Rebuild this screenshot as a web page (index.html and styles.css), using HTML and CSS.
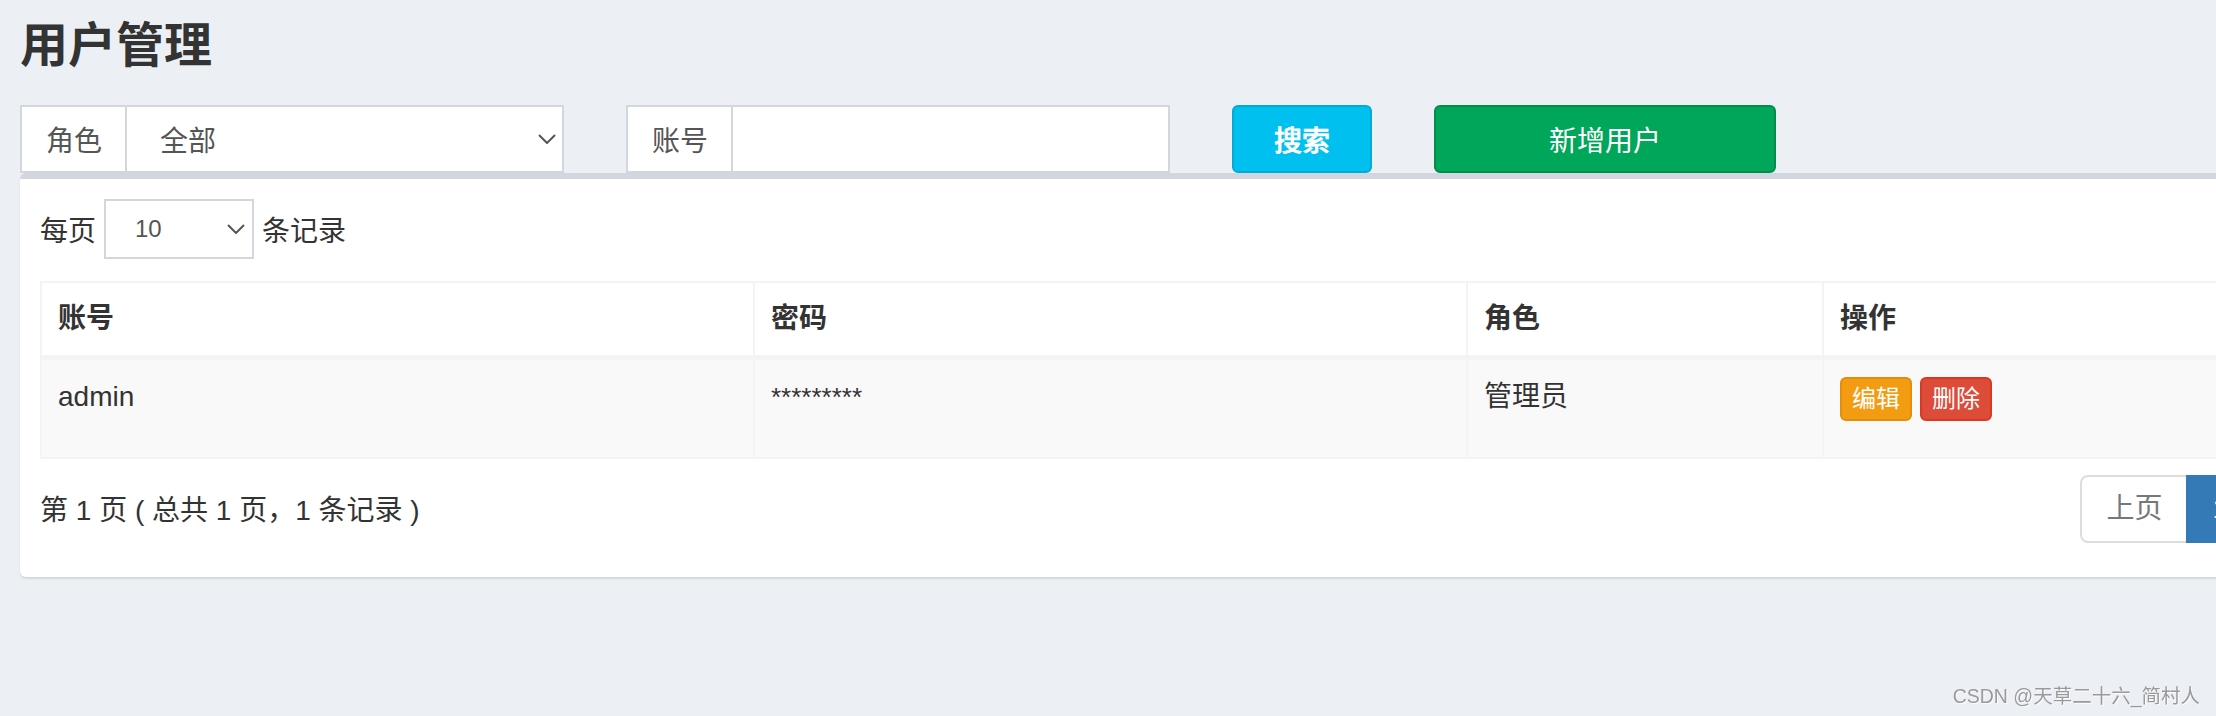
FILE: index.html
```html
<!DOCTYPE html>
<html lang="zh-CN">
<head>
<meta charset="utf-8">
<title>用户管理</title>
<link rel="stylesheet" href="styles.css">
</head>
<body>
<div class="page">
  <h1 class="title">用户管理</h1>
  <div class="filters">
    <div class="igroup">
      <span class="addon">角色</span>
      <div class="control select">
        <span>全部</span>
        <svg class="chev" width="18" height="10" viewBox="0 0 18 10"><polyline points="1,1 9,9 17,1" fill="none" stroke="#555" stroke-width="2"/></svg>
      </div>
    </div>
    <div class="igroup">
      <span class="addon">账号</span>
      <div class="control"></div>
    </div>
    <button class="btn btn-search">搜索</button>
    <button class="btn btn-add">新增用户</button>
  </div>
  <div class="box">
    <div class="length">
      <span>每页</span>
      <div class="select-sm">
        <span>10</span>
        <svg class="chev" width="18" height="10" viewBox="0 0 18 10"><polyline points="1,1 9,9 17,1" fill="none" stroke="#555" stroke-width="2"/></svg>
      </div>
      <span>条记录</span>
    </div>
    <table class="grid">
      <colgroup>
        <col class="c1"><col class="c2"><col class="c3"><col class="c4">
      </colgroup>
      <thead>
        <tr><th>账号</th><th>密码</th><th>角色</th><th>操作</th></tr>
      </thead>
      <tbody>
        <tr>
          <td>admin</td>
          <td class="pwd">*********</td>
          <td>管理员</td>
          <td><div class="actions"><button class="xs xs-edit">编辑</button><button class="xs xs-del">删除</button></div></td>
        </tr>
      </tbody>
    </table>
    <div class="footer">
      <div class="info">第 1 页 ( 总共 1 页，1 条记录 )</div>
      <ul class="pagination">
        <li class="pg pg-first">上页</li>
        <li class="pg pg-active">1</li>
        <li class="pg pg-last">下页</li>
      </ul>
    </div>
  </div>
</div>
<div class="watermark">CSDN @天草二十六_简村人</div>
</body>
</html>
```
FILE: styles.css
```css
html, body {
  margin: 0;
  padding: 0;
  overflow: hidden;
}
body {
  background: #ecf0f5;
  font-family: "Liberation Sans", "Noto Sans CJK SC", sans-serif;
  font-size: 28px;
  color: #333;
  width: 2216px;
  height: 716px;
}
.page {
  padding: 20px 0 0 20px;
}
.title {
  margin: 0;
  font-size: 48px;
  line-height: 52px;
  font-weight: bold;
  color: #333;
}
.filters {
  display: flex;
  gap: 62px;
  margin-top: 33px;
  height: 68px;
}
.igroup {
  display: flex;
  height: 68px;
}
.addon {
  display: flex;
  align-items: center;
  box-sizing: border-box;
  height: 68px;
  padding: 0 23px 0 24px;
  border: 2px solid #d2d6de;
  background: #fff;
  color: #555;
}
.control {
  box-sizing: border-box;
  width: 437px;
  height: 68px;
  border: 2px solid #d2d6de;
  border-left: 0;
  background: #fff;
}
.select {
  display: flex;
  align-items: center;
  justify-content: space-between;
  padding: 0 6px 0 33px;
  color: #555;
}
.btn {
  box-sizing: border-box;
  height: 68px;
  border: 2px solid;
  border-radius: 6px;
  color: #fff;
  font-family: inherit;
  font-size: 28px;
  padding: 0;
}
.btn-search {
  width: 140px;
  background: #00c0ef;
  border-color: #00acd6;
  font-weight: 500;
  -webkit-text-stroke: 0.6px #fff;
}
.btn-add {
  width: 342px;
  background: #00a65a;
  border-color: #008d4c;
}
.box {
  box-sizing: border-box;
  width: 2360px;
  background: #fff;
  border-top: 6px solid #d2d6de;
  border-radius: 6px;
  box-shadow: 0 2px 2px rgba(0, 0, 0, 0.1);
  padding: 20px;
}
.length {
  display: flex;
  align-items: center;
  gap: 8px;
  height: 60px;
}
.select-sm {
  box-sizing: border-box;
  width: 150px;
  height: 60px;
  border: 2px solid #d2d6de;
  display: flex;
  align-items: center;
  justify-content: space-between;
  padding: 0 7px 0 29px;
  font-size: 24px;
  color: #555;
}
.grid {
  margin-top: 22px;
  width: 2320px;
  table-layout: fixed;
  border-collapse: collapse;
  border: 2px solid #f4f4f4;
}
.c1 { width: 713px; }
.c2 { width: 713px; }
.c3 { width: 356px; }
.c4 { width: 538px; }
.grid th,
.grid td {
  text-align: left;
  padding: 16px;
  line-height: 40px;
  border: 2px solid #f4f4f4;
  vertical-align: top;
}
.grid th {
  font-weight: bold;
  background: #fff;
  border-bottom-width: 5px;
}
.grid td {
  background: #f9f9f9;
  padding-top: 17px;
  padding-bottom: 40px;
}
.pwd {
  font-size: 26px;
}
.actions {
  display: flex;
  gap: 8px;
  height: 40px;
  align-items: flex-start;
}
.xs {
  box-sizing: border-box;
  height: 44px;
  width: 72px;
  border: 2px solid;
  border-radius: 6px;
  color: #fff;
  font-family: inherit;
  font-size: 24px;
  line-height: 36px;
  padding: 0;
}
.xs-edit {
  background: #f39c12;
  border-color: #e08e0b;
}
.xs-del {
  background: #dd4b39;
  border-color: #d73925;
}
.footer {
  display: flex;
  align-items: center;
  justify-content: space-between;
  margin-top: 16px;
  margin-bottom: 14px;
}
.info {
  color: #333;
  margin-top: -3px;
}
.pagination {
  display: flex;
  list-style: none;
  margin: 0;
  padding: 0;
}
.pg {
  box-sizing: border-box;
  height: 68px;
  padding: 12px 24px;
  line-height: 40px;
  border: 2px solid #ddd;
  margin-left: -2px;
  color: #777;
  background: #fff;
}
.pg-first {
  margin-left: 0;
  border-radius: 8px 0 0 8px;
}
.pg-last {
  border-radius: 0 8px 8px 0;
}
.pg-active {
  background: #337ab7;
  border-color: #337ab7;
  color: #fff;
}
.watermark {
  position: fixed;
  right: 16px;
  bottom: 8px;
  font-size: 19.5px;
  line-height: 24px;
  color: #9a9a9a;
  text-shadow: 1px 1px 0 rgba(255, 255, 255, 0.8);
}
```
